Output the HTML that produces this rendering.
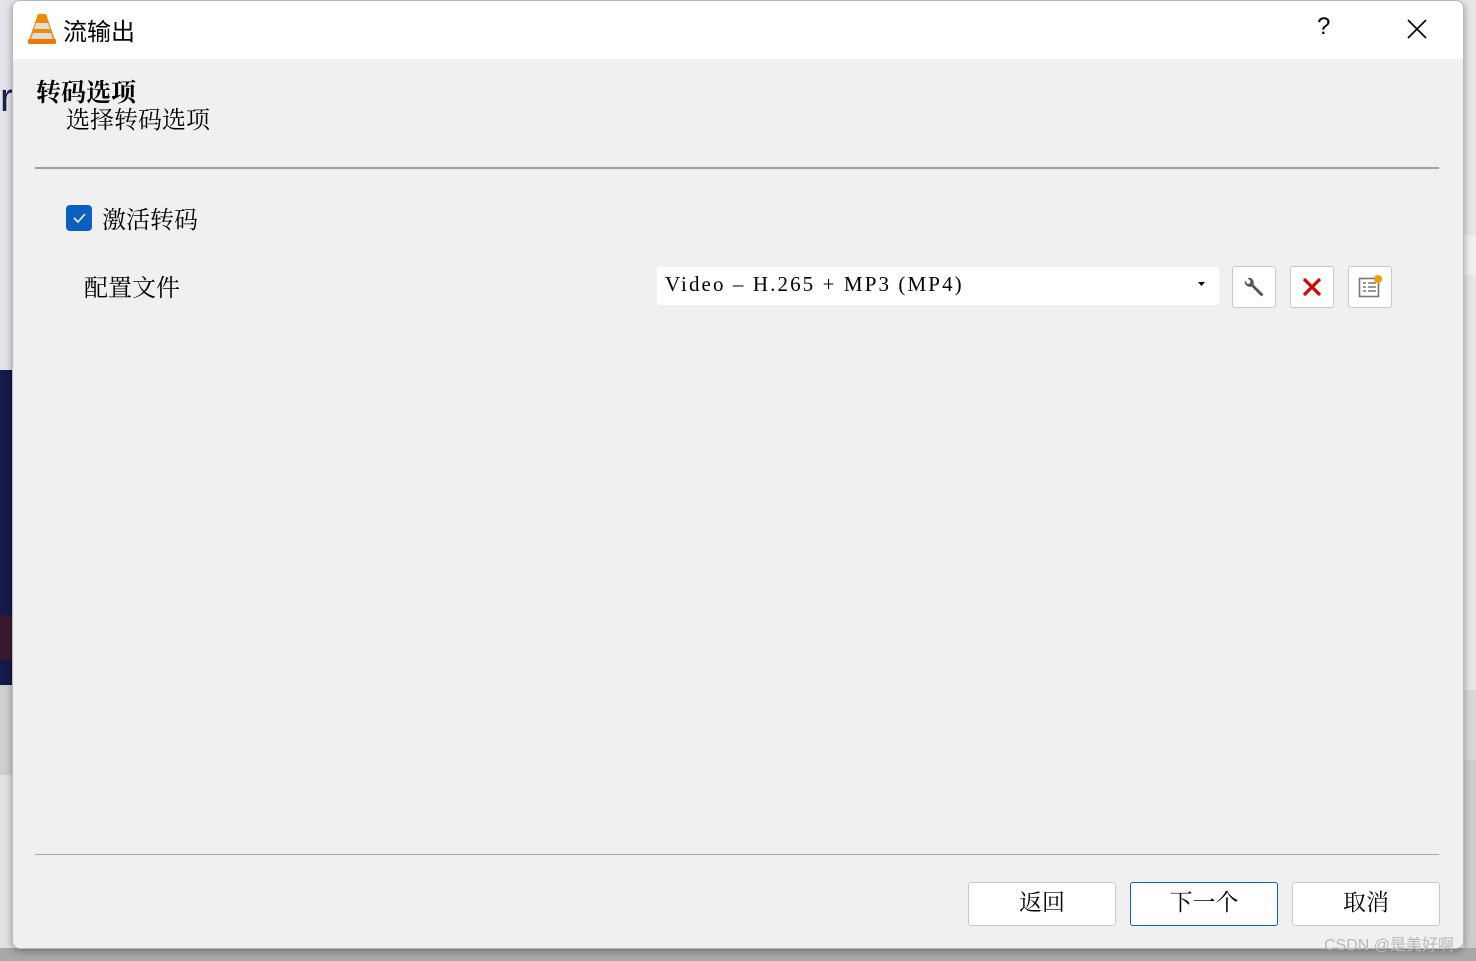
<!DOCTYPE html>
<html><head><meta charset="utf-8"><style>
*{margin:0;padding:0;box-sizing:border-box}
body{width:1476px;height:961px;position:relative;overflow:hidden;background:#ececec;font-family:"Liberation Serif","Noto Serif CJK SC",serif;color:#000}
.abs{position:absolute}
.dlg{left:12px;top:0;width:1452px;height:949px;background:#f0f0f0;border:1px solid #b8b8b8;border-radius:8px;overflow:hidden;box-shadow:0 2px 8px rgba(0,0,0,.35)}
.title{left:0;top:0;width:100%;height:58px;background:#fff}
.btn{background:#fff;border:1px solid #c8c8c8;border-radius:3px;text-align:center}
.sans{font-family:"Liberation Sans","Noto Sans CJK SC",sans-serif}
</style></head><body>
<div class="abs" style="left:0;top:0;width:12px;height:370px;background:#e4e4ea"></div>
<div class="abs" style="left:0;top:76px;font:40px 'Liberation Sans',sans-serif;color:#1a2350">r</div>
<div class="abs" style="left:0;top:370px;width:12px;height:315px;background:#141a4a"></div>
<div class="abs" style="left:0;top:615px;width:12px;height:45px;background:#3a1a2e"></div>
<div class="abs" style="left:0;top:685px;width:12px;height:90px;background:#cfcfcf"></div>
<div class="abs" style="left:0;top:775px;width:12px;height:186px;background:#e2e2e2"></div>
<div class="abs" style="left:1464px;top:0;width:12px;height:961px;background:#e6e6e6"></div>
<div class="abs" style="left:1464px;top:235px;width:12px;height:40px;background:#f0f0f0"></div>
<div class="abs" style="left:1464px;top:690px;width:12px;height:70px;background:#d8d8d8"></div>
<div class="abs" style="left:1464px;top:760px;width:12px;height:201px;background:#cdcdcd"></div>
<div class="abs" style="left:0;top:948px;width:1476px;height:13px;background:#a8a8a8"></div>

<div class="abs dlg">
 <div class="abs title"></div>
 <svg class="abs" style="left:14px;top:12px" width="30" height="32" viewBox="0 0 30 32">
  <path d="M11 1h8l9 26H2z" fill="#f08a00"/>
  <path d="M9 10h12l2 6H7z" fill="#ddd"/>
  <path d="M6 20h18l2 6H4z" fill="#ddd"/>
  <rect x="1" y="26" width="28" height="5" rx="1.5" fill="#f07800"/>
 </svg>
 <div class="abs sans" style="left:50px;top:11px;font-size:24px">流输出</div>
 <div class="abs sans" style="left:1304px;top:12px;font-size:24px">?</div>
 <svg class="abs" style="left:1394px;top:18px" width="20" height="20"><path d="M1 1L19 19M19 1L1 19" stroke="#000" stroke-width="1.6"/></svg>

 <div class="abs" style="left:23px;top:72px;font-size:25px;font-weight:bold">转码选项</div>
 <div class="abs" style="left:53px;top:99px;font-size:24px">选择转码选项</div>
 <div class="abs" style="left:22px;top:166px;width:1404px;height:2px;background:#a0a0a0"></div>

 <div class="abs" style="left:53px;top:204px;width:26px;height:26px;border-radius:4px;background:#0a5fc0"></div>
 <svg class="abs" style="left:53px;top:204px" width="26" height="26"><path d="M8 13l4 4 7-8" stroke="#fff" stroke-width="1.6" fill="none"/></svg>
 <div class="abs" style="left:89px;top:199px;font-size:24px">激活转码</div>
 <div class="abs" style="left:71px;top:267px;font-size:24px">配置文件</div>

 <div class="abs" style="left:644px;top:266px;width:562px;height:38px;background:#fff;border-radius:3px"></div>
 <div class="abs" style="left:652px;top:271px;font-size:21px;white-space:pre;letter-spacing:2.1px">Video – H.265 + MP3 (MP4)</div>
 <svg class="abs" style="left:1185px;top:280px" width="8" height="6"><path d="M0 1h7L3.5 5z" fill="#000"/></svg>

 <div class="abs btn" style="left:1219px;top:265px;width:44px;height:42px"></div>
 <svg class="abs" style="left:1229px;top:275px" width="24" height="24" viewBox="0 0 24 24"><path d="M3 4.5a5 5 0 0 0 6.5 6l10 10 2-2-10-10a5 5 0 0 0-6-6.5l3 3-.5 2.5-2.5.5z" fill="#555"/></svg>
 <div class="abs btn" style="left:1277px;top:265px;width:44px;height:42px"></div>
 <svg class="abs" style="left:1289px;top:276px" width="20" height="20"><path d="M2 2L18 18M18 2L2 18" stroke="#d80000" stroke-width="3.2"/></svg>
 <div class="abs btn" style="left:1335px;top:265px;width:44px;height:42px"></div>
 <svg class="abs" style="left:1345px;top:273px" width="26" height="26"><rect x="1.5" y="4.5" width="19" height="18" fill="none" stroke="#777" stroke-width="1.6"/><path d="M5 9h3M10 9h8M5 13h3M10 13h8M5 17h3M10 17h8" stroke="#777" stroke-width="1.6"/><circle cx="20" cy="5" r="4" fill="#f59a00"/></svg>

 <div class="abs" style="left:22px;top:853px;width:1404px;height:1px;background:#a8a8a8"></div>
 <div class="abs btn" style="left:955px;top:881px;width:148px;height:44px;font-size:23px;line-height:40px">返回</div>
 <div class="abs btn" style="left:1117px;top:881px;width:148px;height:44px;font-size:23px;line-height:40px;border-color:#0a64c8">下一个</div>
 <div class="abs btn" style="left:1279px;top:881px;width:148px;height:44px;font-size:23px;line-height:40px">取消</div>
</div>
<div class="abs sans" style="left:1324px;top:931px;font-size:16px;color:#b8b8b8">CSDN @是美好啊</div>
</body></html>
